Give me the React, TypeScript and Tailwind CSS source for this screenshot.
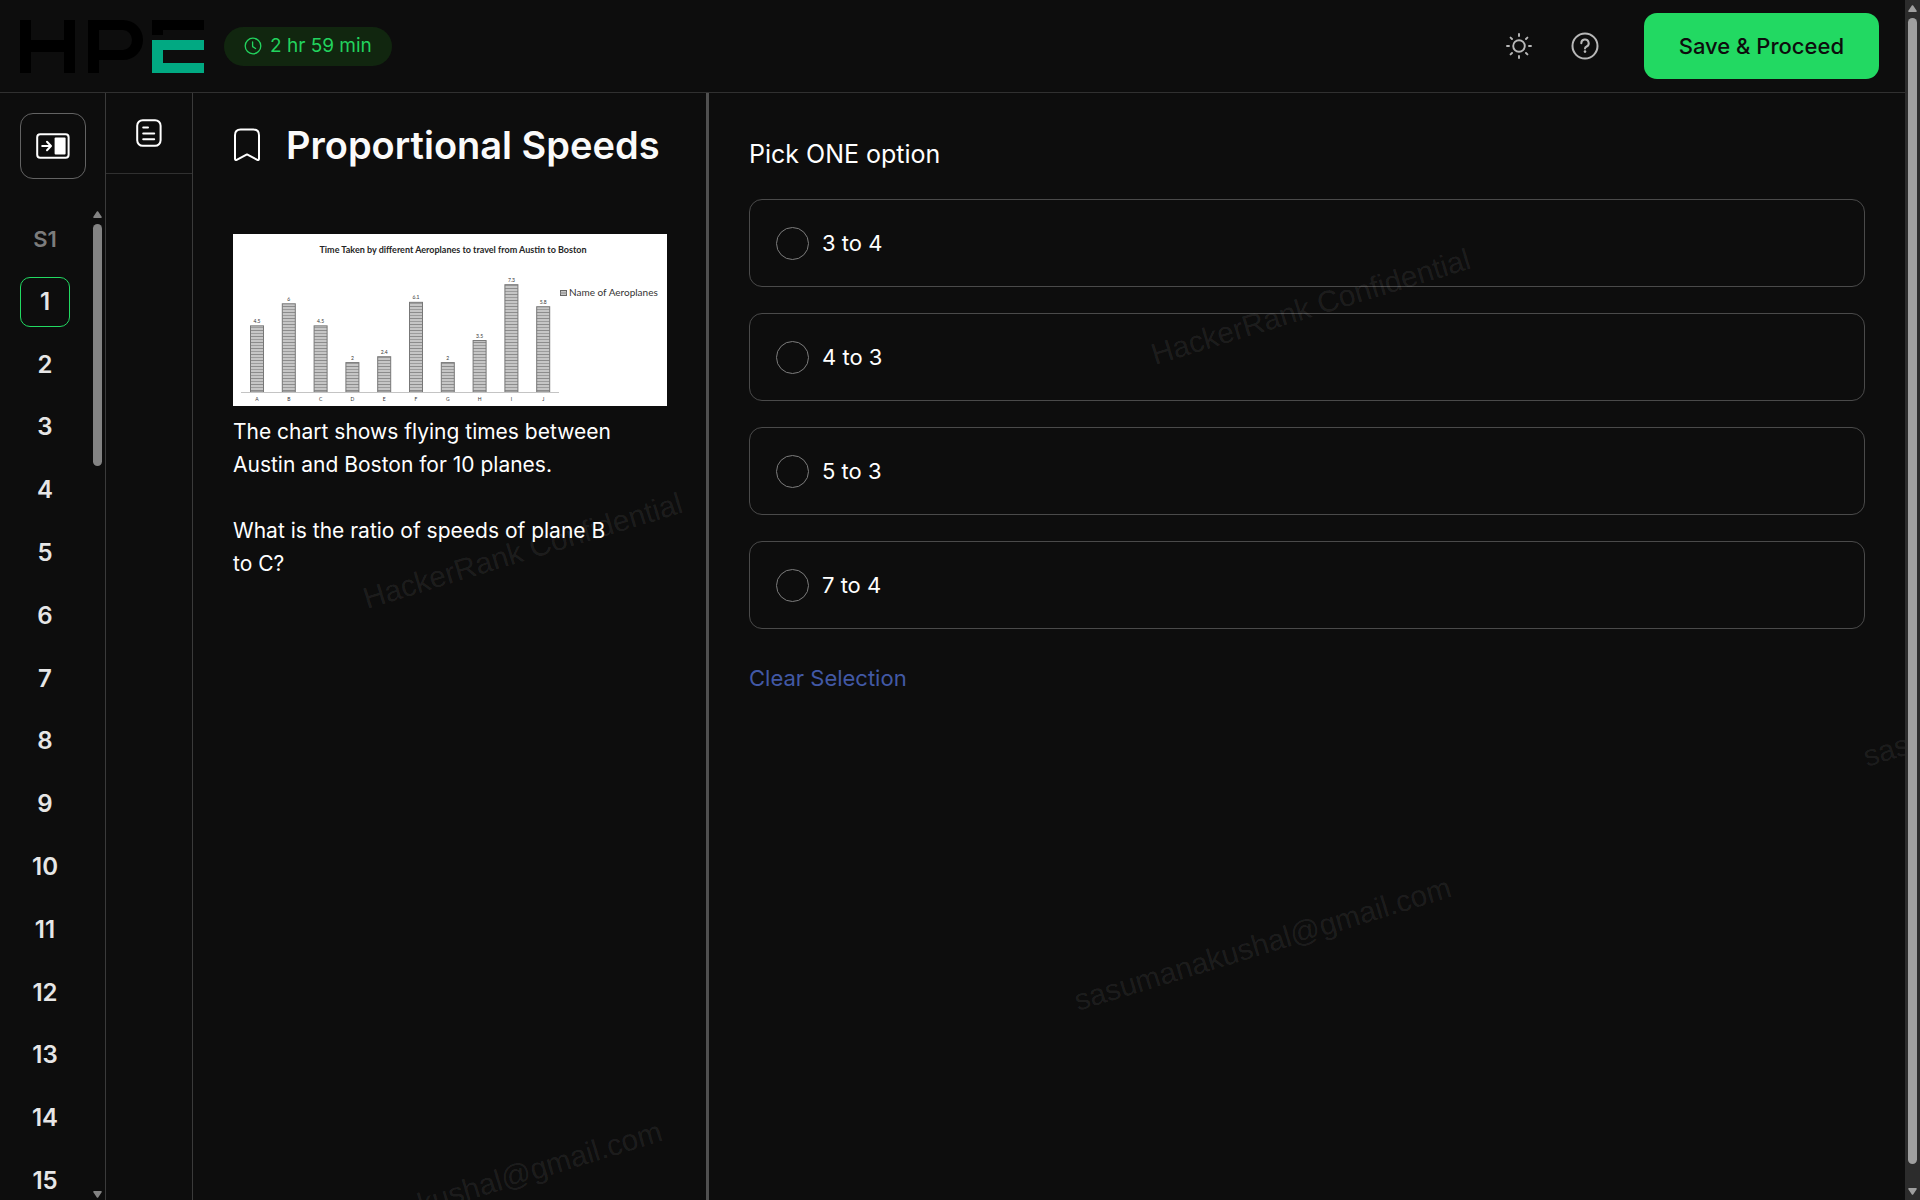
import { useState } from 'react';

const QUESTIONS = Array.from({ length: 15 }, (_, i) => i + 1);

const OPTIONS = ['3 to 4', '4 to 3', '5 to 3', '7 to 4'];

const FLIGHTS: [string, number][] = [
  ['A', 4.5],
  ['B', 6],
  ['C', 4.5],
  ['D', 2],
  ['E', 2.4],
  ['F', 6.1],
  ['G', 2],
  ['H', 3.5],
  ['I', 7.3],
  ['J', 5.8],
];

function Logo() {
  return (
    <div role="img" aria-label="HPE" className="flex h-[53px] gap-[13px]">
      <div className="grid w-[55px] grid-cols-[11px_1fr_11px] items-center">
        <div className="h-full bg-black" />
        <div className="h-3 bg-black" />
        <div className="h-full bg-black" />
      </div>
      <div className="-mr-1 w-[55px]">
        <div className="h-10 rounded-r-[20px] border-x-[11px] border-y-10 border-black" />
        <div className="h-[13px] w-[11px] bg-black" />
      </div>
      <div className="flex w-[52px] flex-col justify-between">
        <div>
          <div className="h-2.5 bg-black" />
          <div className="h-[5px] w-[11px] bg-black" />
        </div>
        <div className="h-[33px] border-y-10 border-l-[11px] border-[#01a982]" />
      </div>
    </div>
  );
}

function ClockIcon() {
  return (
    <svg width="18" height="18" viewBox="0 0 18 18" fill="none" stroke="currentColor" strokeLinecap="round" strokeLinejoin="round">
      <circle cx="9" cy="9" r="7.8" strokeWidth="1.3" />
      <path d="M8.6 5v4.6l3 1.9" strokeWidth="1.3" />
    </svg>
  );
}

function SunIcon() {
  return (
    <svg width="28" height="28" viewBox="0 0 28 28" fill="none" stroke="currentColor" strokeWidth="1.9" strokeLinecap="round">
      <circle cx="14" cy="14" r="5.8" />
      <path d="M14 2v2M14 24v2M2 14h2M24 14h2M5.6 5.6 7 7M21 21l1.4 1.4M22.4 5.6 21 7M7 21l-1.4 1.4" />
    </svg>
  );
}

function HelpIcon() {
  return (
    <svg width="28" height="28" viewBox="0 0 28 28" fill="none" stroke="currentColor" strokeWidth="2" strokeLinecap="round" strokeLinejoin="round">
      <circle cx="14" cy="14" r="12.5" />
      <path d="M10.3 11.3a3.7 3.7 0 1 1 5.4 3.2c-1 .5-1.7 1-1.7 2" />
      <circle cx="14" cy="19.6" r="1.3" fill="currentColor" stroke="none" />
    </svg>
  );
}

function PanelIcon() {
  return (
    <svg width="34" height="26" viewBox="0 0 34 26" fill="none" stroke="currentColor" strokeWidth="2" strokeLinecap="round" strokeLinejoin="round">
      <rect x="1.2" y="1.2" width="31.4" height="23.6" rx="3" />
      <path d="M6.2 13h8.6M11 8.8l4 4.2-4 4.2" />
      <rect x="18.6" y="4.6" width="11" height="16.8" rx="1" fill="currentColor" stroke="none" />
    </svg>
  );
}

function NotesIcon() {
  return (
    <svg width="26" height="28" viewBox="0 0 26 28" fill="none" stroke="currentColor" strokeWidth="2" strokeLinecap="round">
      <rect x="1.2" y="1.2" width="23.4" height="25.6" rx="5.5" />
      <path d="M7.2 8.6h4.8M7.2 14.4h11M7.2 20.2h11" />
    </svg>
  );
}

function BookmarkIcon() {
  return (
    <svg width="28" height="34" viewBox="0 0 28 34" fill="none" stroke="currentColor" strokeWidth="2" strokeLinejoin="round">
      <path d="M2 7.2c0-3.8 1.8-5.6 5.6-5.6h12.8c3.8 0 5.6 1.8 5.6 5.6v23.6c0 1-.8 1.6-1.7 1.1L14 26.4 3.7 31.9c-.9.5-1.7-.1-1.7-1.1z" />
    </svg>
  );
}

function FlightChart() {
  const axis = 158;
  return (
    <svg viewBox="0 0 434 172" className="block w-full bg-white font-['Lato',sans-serif]" role="img" aria-label="Time taken by different aeroplanes">
      <defs>
        <pattern id="stripes" width="14" height="6" patternUnits="userSpaceOnUse">
          <rect width="14" height="6" fill="#c6c6c6" />
          <rect y="0" width="14" height="1" fill="#8c8c8c" />
          <rect y="3" width="14" height="1" fill="#9c9c9c" />
        </pattern>
      </defs>
      <text x="220" y="19" textAnchor="middle" fontSize="9" fontWeight="700" fill="#262626">
        Time Taken by different Aeroplanes to travel from Austin to Boston
      </text>
      {FLIGHTS.map(([name, hours], i) => {
        const height = hours * 14.7;
        const x = 17.5 + i * 31.8;
        return (
          <g key={name}>
            <rect x={x} y={axis - height} width="13" height={height} fill="url(#stripes)" stroke="#777" strokeWidth="1" />
            <text x={x + 6.5} y={axis - height - 3} textAnchor="middle" fontSize="5" fill="#333">
              {hours}
            </text>
            <text x={x + 6.5} y="167" textAnchor="middle" fontSize="5" fill="#333">
              {name}
            </text>
          </g>
        );
      })}
      <path d={`M8 ${axis + 0.5}H326`} stroke="#c4c4c4" />
      <rect x="327.5" y="56.5" width="6" height="5" fill="#c6c6c6" stroke="#666" />
      <path d="M327 59h7" stroke="#888" />
      <text x="336" y="62" fontSize="10" fill="#333">
        Name of Aeroplanes
      </text>
    </svg>
  );
}

function Arrow({ down = false }: { down?: boolean }) {
  return (
    <svg width="9" height="7" viewBox="0 0 9 7" fill="currentColor" stroke="currentColor" strokeLinejoin="round" className={down ? 'rotate-180' : ''}>
      <path d="M4.5 1 8 6.2H1z" strokeWidth="1.6" />
    </svg>
  );
}

const MARK =
  "absolute whitespace-nowrap origin-[0_25px] -rotate-17 font-['Liberation_Sans',Arial,sans-serif] text-[30px] leading-none text-white/8";

function Watermarks() {
  return (
    <div className="pointer-events-none absolute inset-0 overflow-hidden">
      <span className={`${MARK} left-[1155px] top-[340px]`}>HackerRank Confidential</span>
      <span className={`${MARK} left-[367px] top-[584px]`}>HackerRank Confidential</span>
      <span className={`${MARK} left-[1078px] top-[986px]`}>sasumanakushal@gmail.com</span>
      <span className={`${MARK} left-[289px] top-[1230px]`}>sasumanakushal@gmail.com</span>
      <span className={`${MARK} left-[1867px] top-[742px]`}>sasumanakushal@gmail.com</span>
    </div>
  );
}

function Header() {
  return (
    <header className="flex h-[93px] shrink-0 items-center border-b border-[#303030] pl-5 pr-[26px]">
      <Logo />
      <div className="ml-5 flex h-[39px] items-center gap-2 rounded-full bg-[#11260f] px-5 text-[19px] text-[#22d35e]">
        <ClockIcon />
        <span>2 hr 59 min</span>
      </div>
      <div className="ml-auto flex items-center">
        <button type="button" aria-label="Theme" className="mr-[38px] text-[#b8b8b8]">
          <SunIcon />
        </button>
        <button type="button" aria-label="Help" className="mr-[45px] text-[#b8b8b8]">
          <HelpIcon />
        </button>
        <button type="button" className="h-[66px] rounded-[13px] bg-[#22d962] px-[35px] text-[22px] font-medium text-[#0d0d0d]">
          Save &amp; Proceed
        </button>
      </div>
    </header>
  );
}

function QuestionNav() {
  return (
    <nav className="flex w-[106px] shrink-0 flex-col border-r border-[#3a3a3a]">
      <button
        type="button"
        aria-label="Expand panel"
        className="ml-5 mt-5 flex size-[66px] shrink-0 items-center justify-center rounded-[13px] border border-[#636363]"
      >
        <PanelIcon />
      </button>
      <div className="mt-8 flex min-h-0 flex-1 justify-between pl-5 pr-[3px]">
        <div className="-mb-1.5 flex flex-col justify-between pt-[3px] text-center text-[24px] font-semibold text-[#e6e6e6]">
          <span className="flex h-[50px] items-center justify-center text-[22px] text-[#7c7c7c]">S1</span>
          {QUESTIONS.map((n) => (
            <button
              key={n}
              type="button"
              className={
                n === 1
                  ? 'size-[50px] shrink-0 rounded-[10px] border border-[#22d962]'
                  : 'size-[50px] shrink-0'
              }
            >
              {n}
            </button>
          ))}
        </div>
        <div className="flex flex-col items-center pb-0.5 text-[#838383]">
          <Arrow />
          <div className="mt-1.5 h-[242px] w-[9px] rounded-full bg-[#838383]" />
          <div className="mt-auto">
            <Arrow down />
          </div>
        </div>
      </div>
    </nav>
  );
}

function Question() {
  return (
    <section className="w-[513px] shrink-0 pl-10 pr-[39px] pt-7">
      <div className="flex items-center gap-[25px]">
        <button type="button" aria-label="Bookmark" className="shrink-0">
          <BookmarkIcon />
        </button>
        <h1 className="whitespace-nowrap text-[38px] font-semibold leading-[48px] text-[#fafafa]">Proportional Speeds</h1>
      </div>
      <div className="mt-[65px]">
        <FlightChart />
      </div>
      <div className="mt-[9px] pr-10 text-[21px] leading-[33px] text-white">
        <p>The chart shows flying times between Austin and Boston for 10 planes.</p>
        <p className="mt-[33px]">What is the ratio of speeds of plane B to C?</p>
      </div>
    </section>
  );
}

function Answers() {
  const [picked, setPicked] = useState<string | null>(null);
  return (
    <section className="min-w-0 flex-1 px-10 pt-[45px]">
      <fieldset>
        <legend className="text-[25px] leading-8 text-white">Pick ONE option</legend>
        <div className="mt-[29px] flex flex-col gap-[26px]">
          {OPTIONS.map((option) => (
            <label
              key={option}
              className="flex h-[88px] items-center gap-[13px] rounded-[13px] border border-[#4a4a4a] px-[26px] text-[22px] text-white"
            >
              <input
                type="radio"
                name="answer"
                checked={picked === option}
                onChange={() => setPicked(option)}
                className="size-[33px] appearance-none rounded-full border border-[#7c7c7c] checked:border-[10px] checked:border-[#22d962]"
              />
              {option}
            </label>
          ))}
        </div>
      </fieldset>
      <button type="button" onClick={() => setPicked(null)} className="mt-[33px] text-[22px] leading-8 text-[#4259a5]">
        Clear Selection
      </button>
    </section>
  );
}

export default function App() {
  return (
    <div className="relative flex h-screen overflow-hidden bg-[#0d0d0d] font-['Inter',sans-serif] text-white">
      <div className="relative flex min-w-0 flex-1 flex-col">
        <Header />
        <div className="flex min-h-0 flex-1">
          <QuestionNav />
          <aside className="w-[87px] shrink-0 border-r border-[#3a3a3a]">
            <button type="button" aria-label="Question details" className="flex h-[81px] w-full items-center justify-center border-b border-[#303030]">
              <NotesIcon />
            </button>
          </aside>
          <Question />
          <div className="w-[3px] shrink-0 bg-[#505050]" />
          <Answers />
        </div>
        <Watermarks />
      </div>
      <div className="flex w-[15px] shrink-0 flex-col items-center bg-[#2c2c2c] py-[5px] text-[#9f9f9f]">
        <Arrow />
        <div className="mb-6 mt-1.5 w-[9px] flex-1 rounded-full bg-[#9f9f9f]" />
        <Arrow down />
      </div>
    </div>
  );
}
